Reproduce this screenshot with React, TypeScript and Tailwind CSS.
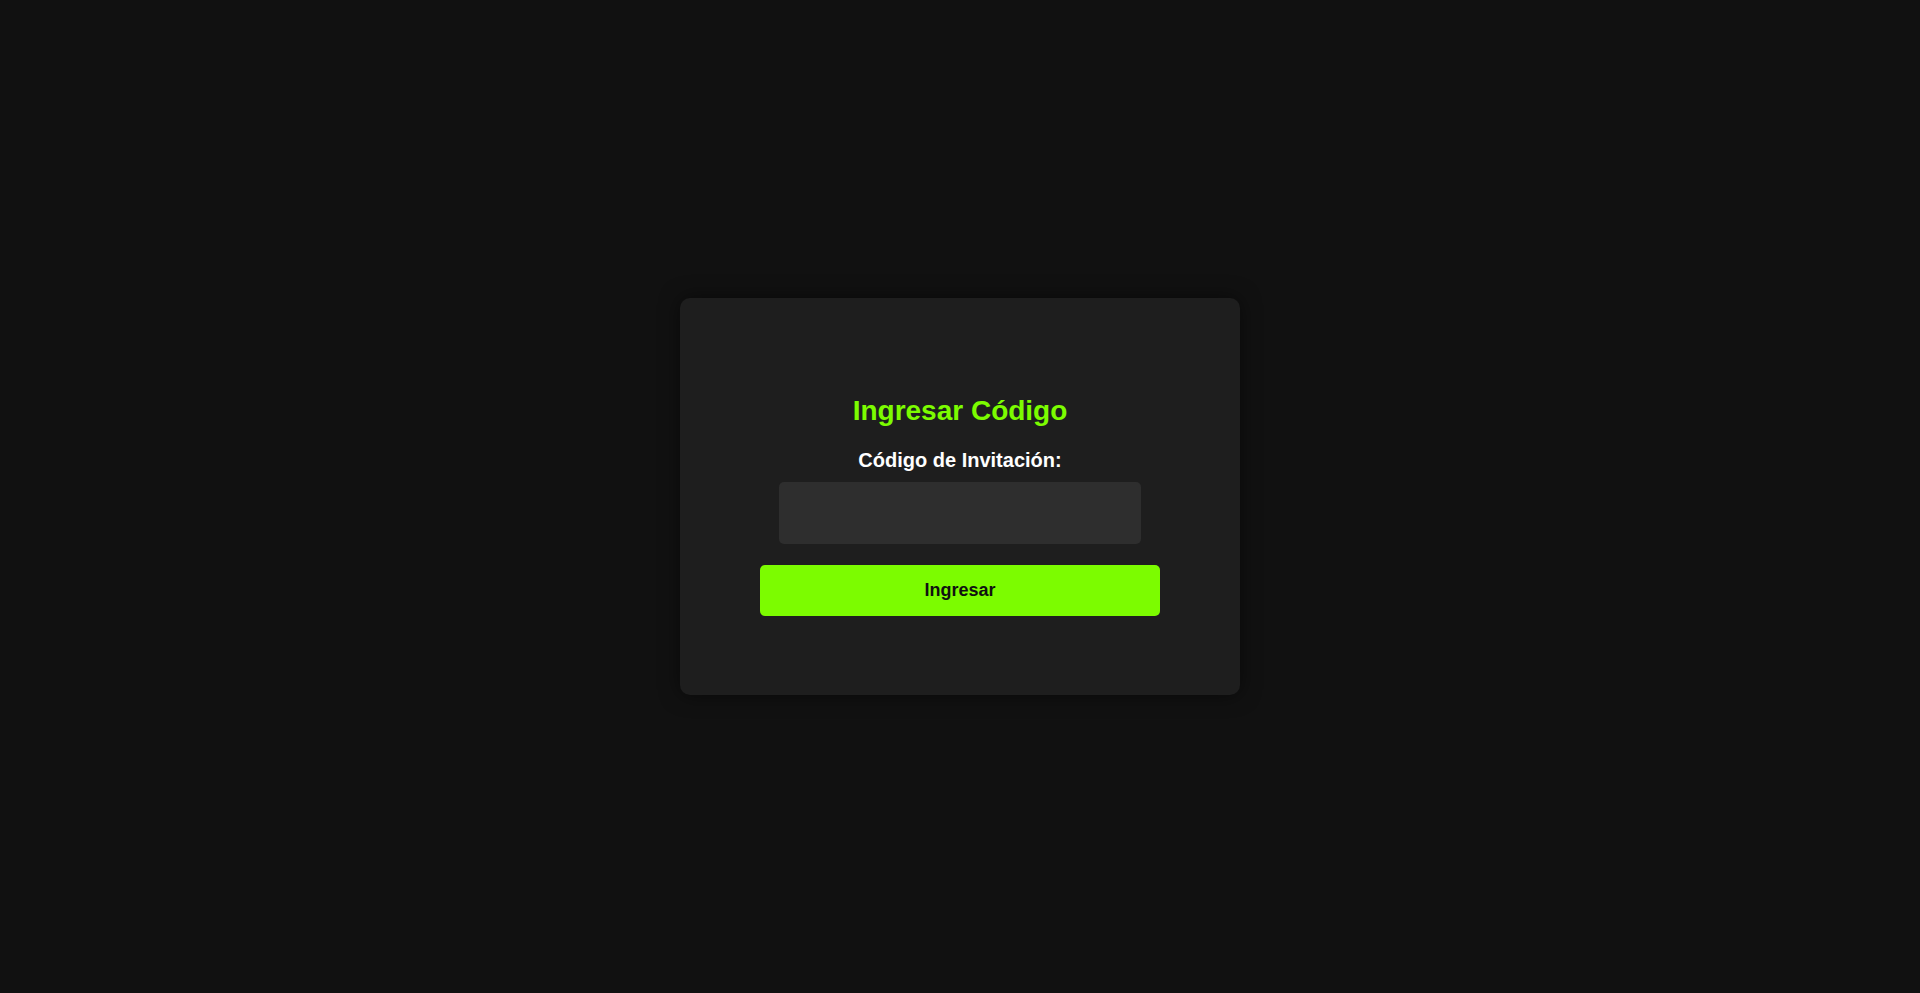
import React from 'react';

/**
 * Invitation code entry screen
 */
const App: React.FC = () => {
  return (
    <div className="min-h-screen w-full bg-[#111111] flex items-center justify-center font-['Liberation_Sans',Arial,sans-serif]">
      <div className="w-[560px] h-[397px] bg-[#1e1e1e] rounded-[10px] shadow-[0_0_20px_rgba(0,0,0,0.5)] flex flex-col items-center pt-[97px]">
        {/* Title */}
        <h2 className="text-[28px] leading-[32px] font-bold text-[#7cfc00]">Ingresar Código</h2>

        {/* Field */}
        <label htmlFor="codigo" className="mt-[22px] text-[20px] leading-[22px] font-bold text-white">
          Código de Invitación:
        </label>
        <input
          id="codigo"
          type="text"
          className="mt-[11px] w-[362px] h-[62px] rounded-[5px] bg-[#2e2e2e] text-white text-[18px] px-3 outline-none"
        />

        {/* Submit */}
        <button
          type="button"
          className="mt-[21px] w-[400px] h-[51px] rounded-[5px] bg-[#7cfc00] text-[#111111] text-[18px] font-bold"
        >
          Ingresar
        </button>
      </div>
    </div>
  );
};

export default App;
